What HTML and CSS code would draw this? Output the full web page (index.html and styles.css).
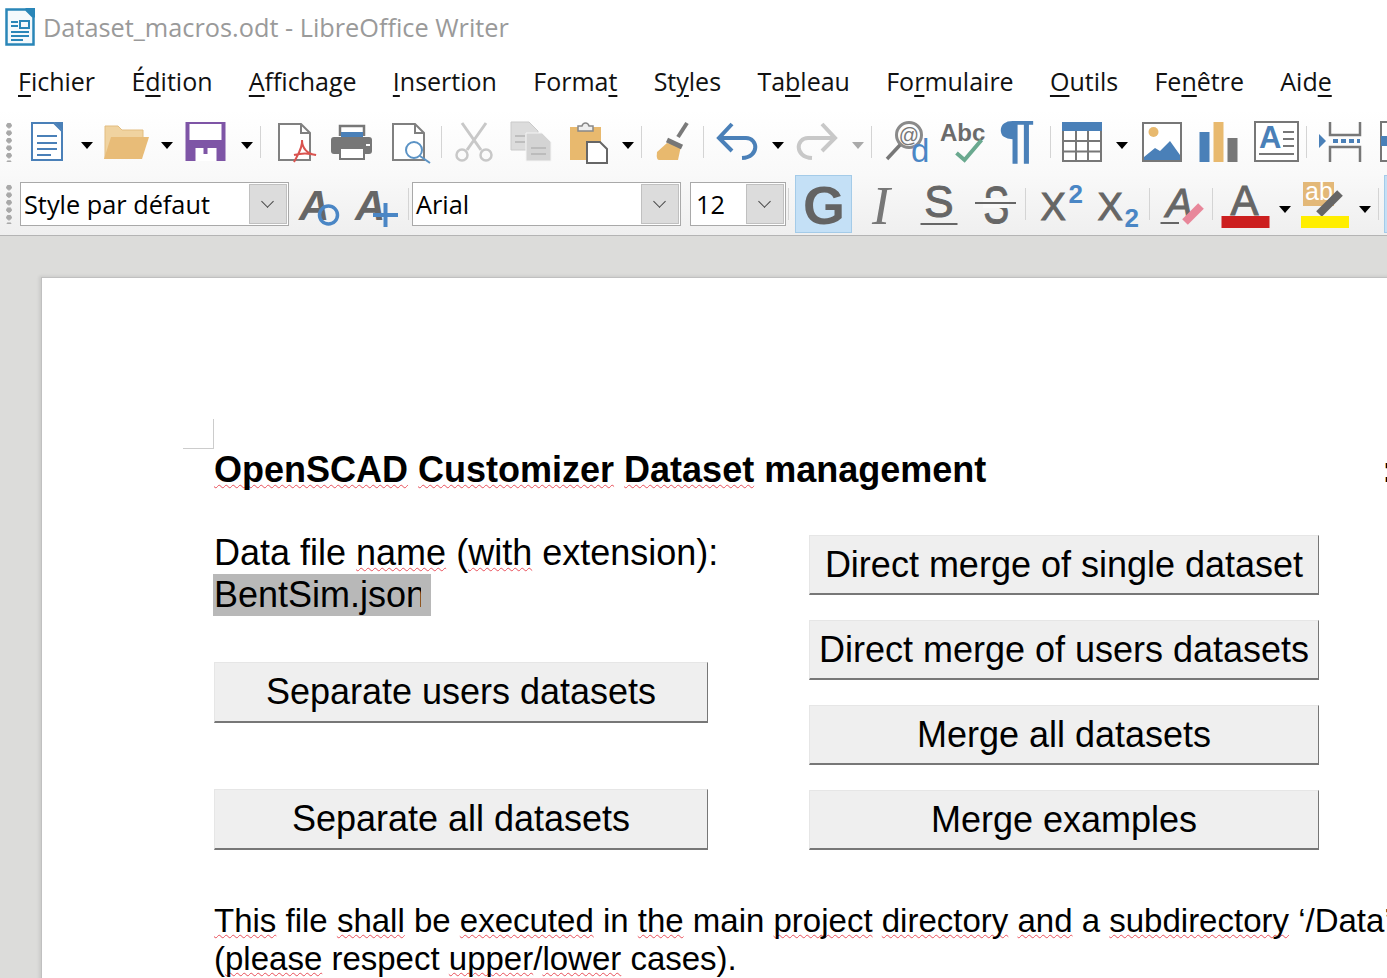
FILE: index.html
```html
<!DOCTYPE html>
<html lang="en">
<head>
    <meta charset="UTF-8">
    <meta name="viewport" content="width=device-width, initial-scale=1.0">
    <title>Dataset_macros.odt - LibreOffice Writer</title>
    <link rel="stylesheet" href="styles.css">
</head>
<body>
    <header class="titlebar">
        <svg class="app-icon" width="30" height="38" viewBox="0 0 30 38">
            <path d="M1.5 1.5H21L28.500 9V36.500H1.500Z" fill="#f4f9fc" stroke="#2a86b8" stroke-width="2.500"/>
            <path d="M20 0H30V10Z" fill="#2a86b8"/>
            <path d="M6 14H13M6 18H13M6 24H24M6 28H24M6 32H18" stroke="#2a86b8" stroke-width="2"/>
            <rect x="15" y="13" width="9" height="7" fill="none" stroke="#2a86b8" stroke-width="2"/>
        </svg>
        <span>Dataset_macros.odt - LibreOffice Writer</span>
    </header>

    <nav class="menubar">
        <span><u>F</u>ichier</span>
        <span>É<u>d</u>ition</span>
        <span><u>A</u>ffichage</span>
        <span><u>I</u>nsertion</span>
        <span>Forma<u>t</u></span>
        <span>St<u>y</u>les</span>
        <span>Ta<u>b</u>leau</span>
        <span>Fo<u>r</u>mulaire</span>
        <span><u>O</u>utils</span>
        <span>Fe<u>n</u>être</span>
        <span>Aid<u>e</u></span>
    </nav>

    <div class="toolbar toolbar-main">
        <div class="grip"></div>
        <div class="tool"><svg width="40" height="40" viewBox="0 0 40 40">
            <path d="M5 1H27L35 9V38H5Z" fill="#fff" stroke="#4a80b8" stroke-width="2"/>
            <path d="M27 0H36V9Z" fill="#4a80b8"/>
            <path d="M10 14H30M10 21H30M10 27H30M10 33H24" stroke="#4a80b8" stroke-width="2"/>
        </svg></div>
        <div class="drop"></div>
        <div class="tool"><svg width="40" height="40" viewBox="0 0 40 40">
            <path d="M-2 37V4H11L15 8H36V16H10Z" fill="#f0d3a0" stroke="#e2bd80"/>
            <path d="M-3 37L4 15H42L35 37Z" fill="#e8bc78"/>
        </svg></div>
        <div class="drop"></div>
        <div class="tool"><svg width="40" height="40" viewBox="0 0 40 40">
            <rect x="-1.500" y="0" width="40" height="39" fill="#7e55a6"/>
            <rect x="2.500" y="2" width="32" height="16" fill="#fff"/>
            <rect x="8.500" y="26" width="21" height="13" fill="#fff"/>
            <rect x="16.500" y="26" width="4" height="6" fill="#7e55a6"/>
        </svg></div>
        <div class="drop"></div>
        <div class="sep sep-wide"></div>
        <div class="tool"><svg width="40" height="40" viewBox="0 0 40 40">
            <path d="M2 2H24L33 11V38H2Z" fill="#fff" stroke="#808080" stroke-width="2"/>
            <path d="M24 2V11H33" fill="none" stroke="#808080" stroke-width="2"/>
            <path d="M17 40C20 34 26 26 25 18C25 26 30 32 39 33C32 31 24 31 17 33" fill="none" stroke="#d9534f" stroke-width="2"/>
        </svg></div>
        <div class="tool"><svg width="40" height="40" viewBox="0 0 40 40">
            <path d="M6 14V4H30V14" fill="#fff" stroke="#777" stroke-width="2.500"/>
            <rect x="7" y="10" width="22" height="6" fill="#4a80b8"/>
            <rect x="-3" y="15" width="41" height="17" rx="3" fill="#777"/>
            <rect x="6" y="26" width="24" height="11" fill="#fff" stroke="#777" stroke-width="2"/>
            <rect x="32" y="22" width="4" height="2" fill="#fff"/>
        </svg></div>
        <div class="tool"><svg width="40" height="40" viewBox="0 0 40 40">
            <path d="M2 2H24L33 11V38H2Z" fill="#fff" stroke="#808080" stroke-width="2"/>
            <path d="M24 2V11H33" fill="none" stroke="#808080" stroke-width="2"/>
            <circle cx="23" cy="28" r="8" fill="#fff" stroke="#5b93c5" stroke-width="2"/>
            <path d="M29 34L39 41" stroke="#5b93c5" stroke-width="2"/>
        </svg></div>
        <div class="sep"></div>
        <div class="tool"><svg width="40" height="40" viewBox="0 0 40 40">
            <path d="M8 1L27 28M32 1L13 28" stroke="#c8c8c8" stroke-width="3"/>
            <circle cx="8" cy="33" r="5.500" fill="none" stroke="#c8c8c8" stroke-width="2.500"/>
            <circle cx="32" cy="33" r="5.500" fill="none" stroke="#c8c8c8" stroke-width="2.500"/>
        </svg></div>
        <div class="tool"><svg width="40" height="40" viewBox="0 0 40 40">
            <path d="M0 0H18L27 9V28H0Z" fill="#dcdcdc" stroke="#cacaca"/>
            <path d="M15 11H31L40 20V39H15Z" fill="#d4d4d4" stroke="#f4f4f4"/>
            <path d="M4 14H14M4 20H14M20 26H35M20 32H35" stroke="#b4b4b4" stroke-width="1.500"/>
        </svg></div>
        <div class="tool"><svg width="40" height="40" viewBox="0 0 40 40">
            <rect x="2" y="5" width="31" height="33" fill="#e8b96e"/>
            <path d="M10 9V4H14C15 0 20 0 21 4H25V9Z" fill="#eee" stroke="#888" stroke-width="1.500"/>
            <path d="M19 20H32L39 27V41H19Z" fill="#fff" stroke="#666" stroke-width="2"/>
        </svg></div>
        <div class="drop"></div>
        <div class="sep sep-thin"></div>
        <div class="tool"><svg width="40" height="40" viewBox="0 0 40 40">
            <path d="M34 1L25 15" stroke="#7a7a7a" stroke-width="4"/>
            <path d="M14 21L4 30Q3 38 6 38H25L28 24Z" fill="#e8b96e"/>
            <path d="M14 18L29 25" stroke="#777" stroke-width="5"/>
        </svg></div>
        <div class="sep sep-mid"></div>
        <div class="tool"><svg width="40" height="40" viewBox="0 0 40 40">
            <path d="M14 2L1 16L14 29M1 16H28C40 16 42 35 24 36" fill="none" stroke="#4a80b8" stroke-width="4"/>
        </svg></div>
        <div class="drop"></div>
        <div class="tool"><svg width="40" height="40" viewBox="0 0 40 40">
            <path d="M24 2L37 16L24 29M37 16H10C-2 16 -4 35 14 36" fill="none" stroke="#c8c8c8" stroke-width="4"/>
        </svg></div>
        <div class="drop drop-off"></div>
        <div class="sep sep-mid"></div>
        <div class="tool"><svg width="40" height="40" viewBox="0 0 40 40">
            <circle cx="23" cy="13" r="12.500" fill="none" stroke="#8a8a8a" stroke-width="3"/>
            <path d="M14 23L1 37" stroke="#777" stroke-width="3.500"/>
            <text class="svg-sans" x="23" y="20" font-size="20" text-anchor="middle" fill="#777">@</text>
            <text class="svg-sans" x="25" y="40" font-size="33" fill="#4a86c5">d</text>
        </svg></div>
        <div class="tool"><svg width="40" height="40" viewBox="0 0 40 40">
            <text class="svg-sans svg-bold" x="-3" y="19" font-size="24" fill="#6b6b6b">Abc</text>
            <path d="M13.500 31L21.500 38L38.500 18" fill="none" stroke="#6aa98f" stroke-width="4"/>
        </svg></div>
        <div class="tool"><svg width="40" height="40" viewBox="0 0 40 40">
            <text class="svg-sans svg-bold" font-size="51" text-anchor="middle" fill="#4a80b8" transform="translate(17 35) scale(1.3 1)">¶</text>
        </svg></div>
        <div class="sep sep-thin"></div>
        <div class="tool"><svg width="40" height="40" viewBox="0 0 40 40">
            <rect x="1" y="1" width="38" height="38" fill="#fff" stroke="#777" stroke-width="2"/>
            <rect x="0" y="0" width="40" height="9" fill="#4a80b8"/>
            <path d="M14 9V39M26 9V39M1 19H39M1 29.500H39" stroke="#777" stroke-width="2"/>
        </svg></div>
        <div class="drop"></div>
        <div class="tool"><svg width="40" height="40" viewBox="0 0 40 40">
            <rect x="1" y="1" width="38" height="38" fill="#fff" stroke="#777" stroke-width="2"/>
            <circle cx="11.500" cy="10" r="5" fill="#e8b96e"/>
            <path d="M2 38V35L13 26L18 29L28 19L38 33V38Z" fill="#4a80b8"/>
        </svg></div>
        <div class="tool"><svg width="40" height="40" viewBox="0 0 40 40">
            <rect x="0.500" y="10" width="10" height="30" fill="#4a80b8"/>
            <rect x="14.500" y="0" width="10" height="40" fill="#e8b96e"/>
            <rect x="28.500" y="16" width="10" height="24" fill="#777"/>
        </svg></div>
        <div class="tool"><svg width="40" height="40" viewBox="0 0 40 40">
            <rect x="-1" y="0" width="43" height="39" fill="#fff" stroke="#777" stroke-width="2"/>
            <text class="svg-sans svg-bold" x="3" y="26" font-size="31" fill="#4a80b8">A</text>
            <path d="M27 10H38M27 17H38M27 24H38M3 32H38" stroke="#777" stroke-width="2"/>
        </svg></div>
        <div class="sep"></div>
        <div class="tool"><svg width="40" height="40" viewBox="0 0 40 40">
            <path d="M11 0V13H41V0M11 40V25H41V40" fill="none" stroke="#777" stroke-width="2.500"/>
            <path d="M14 19H41" stroke="#4a80b8" stroke-width="4" stroke-dasharray="5 3"/>
            <path d="M0 12L7 19L0 26Z" fill="#4a80b8"/>
        </svg></div>
        <div class="tool"><svg width="40" height="40" viewBox="0 0 40 40">
            <rect x="5" y="0" width="40" height="39" fill="#fff" stroke="#777" stroke-width="2"/>
            <rect x="5" y="14" width="12" height="10" fill="#4a80b8"/>
        </svg></div>
    </div>

    <div class="toolbar toolbar-format">
        <div class="grip"></div>
        <div class="combo combo-style"><span>Style par défaut</span><i class="combo-btn"></i></div>
        <div class="tool"><svg width="40" height="40" viewBox="0 0 40 40">
            <text class="svg-sans svg-bolditalic" x="-2" y="36" font-size="42" fill="#666">A</text>
            <circle cx="27.500" cy="31" r="9" fill="none" stroke="#4a86c5" stroke-width="3.500"/>
        </svg></div>
        <div class="tool"><svg width="40" height="40" viewBox="0 0 40 40">
            <text class="svg-sans svg-bolditalic" x="-3" y="36" font-size="42" fill="#666">A</text>
            <path d="M15 31H40M27.500 19V43" stroke="#4a86c5" stroke-width="4"/>
        </svg></div>
        <div class="sep sep-thin"></div>
        <div class="combo combo-font"><span>Arial</span><i class="combo-btn"></i></div>
        <div class="combo combo-size"><span>12</span><i class="combo-btn"></i></div>
        <div class="sep sep-tight"></div>
        <div class="tool tool-on"><svg width="40" height="40" viewBox="0 0 40 40">
            <text class="svg-sans svg-bold" x="20" y="40" font-size="54" text-anchor="middle" fill="#636363">G</text>
        </svg></div>
        <div class="tool"><svg width="40" height="40" viewBox="0 0 40 40">
            <text class="svg-serif" x="20" y="40" font-size="54" font-style="italic" text-anchor="middle" fill="#777">I</text>
        </svg></div>
        <div class="tool"><svg width="40" height="40" viewBox="0 0 40 40">
            <text class="svg-sans svg-heavy" x="21" y="33" font-size="44" text-anchor="middle" fill="#666">S</text>
            <path d="M2.500 40H39.500" stroke="#666" stroke-width="2"/>
        </svg></div>
        <div class="tool"><svg width="40" height="40" viewBox="0 0 40 40">
            <text class="svg-sans svg-heavy" x="28.500" y="39" font-size="52" text-anchor="middle" fill="#666" transform="scale(.75 1)">S</text>
            <rect x="8" y="14" width="26" height="10" fill="#f8f8f8"/>
            <path d="M0 19H41" stroke="#666" stroke-width="2"/>
        </svg></div>
        <div class="sep sep-wide"></div>
        <div class="tool"><svg width="40" height="40" viewBox="0 0 40 40">
            <text class="svg-sans svg-heavy" x="-1.500" y="36" font-size="38" fill="#666">X</text>
            <text class="svg-sans svg-bold" x="26.500" y="19" font-size="26" fill="#4a86c5">2</text>
        </svg></div>
        <div class="tool"><svg width="40" height="40" viewBox="0 0 40 40">
            <text class="svg-sans svg-heavy" x="-1.500" y="36" font-size="38" fill="#666">X</text>
            <text class="svg-sans svg-bold" x="25.500" y="43" font-size="26" fill="#4a86c5">2</text>
        </svg></div>
        <div class="sep"></div>
        <div class="tool"><svg width="40" height="40" viewBox="0 0 40 40">
            <text class="svg-sans svg-italic svg-heavy" x="4" y="33" font-size="40" fill="#666">A</text>
            <path d="M-1.500 39H17" stroke="#666" stroke-width="2"/>
            <path d="M23 38L39 22" stroke="#e8879a" stroke-width="8"/>
        </svg></div>
        <div class="sep"></div>
        <div class="tool"><svg width="40" height="40" viewBox="0 0 40 40">
            <text class="svg-sans svg-heavy" x="19.500" y="31" font-size="42" text-anchor="middle" fill="#666">A</text>
            <rect x="-3.500" y="32" width="48" height="12" fill="#cc1f1f"/>
        </svg></div>
        <div class="drop drop-low"></div>
        <div class="tool"><svg width="40" height="40" viewBox="0 0 40 40">
            <rect x="-2" y="-2" width="31" height="24" fill="#e3b878"/>
            <text class="svg-sans" x="0" y="16" font-size="25" fill="#fff">ab</text>
            <path d="M14 30L35 9" stroke="#666" stroke-width="8"/>
            <rect x="-4" y="32" width="48" height="12" fill="#ffee00"/>
        </svg></div>
        <div class="drop drop-low"></div>
        <div class="sep sep-mid"></div>
        <div class="tool tool-on"></div>
    </div>

    <main class="workspace">
        <article class="page">
            <div class="crop-mark"></div>
            <div class="doc-title">
                <strong><span class="sp">OpenSCAD</span> <span class="sp">Customizer</span> <span class="sp">Dataset</span> management</strong>
                <strong class="cut-char">:</strong>
            </div>
            <div class="doc-columns">
                <section class="col-left">
                    <p class="doc-line">Data file <span class="sp">name</span> (<span class="sp">with</span> extension):</p>
                    <p class="doc-line"><span class="field"><span class="field-text">BentSim.json</span></span></p>
                    <div class="doc-btn btn-first">Separate users datasets</div>
                    <div class="doc-btn btn-second">Separate all datasets</div>
                </section>
                <section class="col-right">
                    <div class="doc-btn">Direct merge of single dataset</div>
                    <div class="doc-btn">Direct merge of users datasets</div>
                    <div class="doc-btn">Merge all datasets</div>
                    <div class="doc-btn">Merge examples</div>
                </section>
            </div>
            <p class="doc-note doc-note-first"><span class="sp">This</span> file <span class="sp">shall</span> be <span class="sp">executed</span> in <span class="sp">the</span> main <span class="sp">project</span> <span class="sp">directory</span> <span class="sp">and</span> a <span class="sp">subdirectory</span> ‘/Data’</p>
            <p class="doc-note">(<span class="sp">please</span> respect <span class="sp">upper</span>/<span class="sp">lower</span> cases).</p>
        </article>
    </main>
</body>
</html>
```

FILE: styles.css
```css
/* Global styles */
html, body {
    height: 100%;
}

body {
    margin: 0;
    overflow: hidden;
    display: flex;
    flex-direction: column;
    background: #fff;
    font-family: 'Open Sans', 'Liberation Sans', sans-serif;
    color: #000;
}

svg {
    display: block;
    overflow: visible;
}

.svg-sans {
    font-family: 'Liberation Sans', sans-serif;
}

.svg-serif {
    font-family: 'Liberation Serif', serif;
}

.svg-bold {
    font-weight: bold;
}

.svg-italic {
    font-style: italic;
}

.svg-bolditalic {
    font-weight: bold;
    font-style: italic;
}

.svg-heavy {
    stroke: #666;
    stroke-width: 1px;
}

/* Title bar */
.titlebar {
    height: 55px;
    box-sizing: border-box;
    padding: 0 0 1px 5px;
    flex: none;
    display: flex;
    align-items: center;
    gap: 8px;
    font-size: 25.300px;
    color: #9a9a9a;
}

/* Menu bar */
.menubar {
    height: 55px;
    box-sizing: border-box;
    padding: 0 0 3px 18px;
    flex: none;
    display: flex;
    align-items: center;
    gap: 36.300px;
    font-size: 25px;
    color: #111;
}

.menubar u {
    text-underline-offset: 4px;
    text-decoration-thickness: 2px;
}

/* Toolbars */
.toolbar {
    flex: none;
    display: flex;
    overflow: hidden;
}

.toolbar-main {
    height: 64px;
    align-items: center;
    background: linear-gradient(#fff, #f9f9f9);
}

.toolbar-format {
    height: 62px;
    padding: 1px 0 2px;
    box-sizing: border-box;
    align-items: stretch;
    background: linear-gradient(#f9f9f9, #efefef);
    border-bottom: 1px solid #b4b4b4;
}

.grip {
    width: 18px;
    height: 40px;
    flex: none;
    align-self: center;
    background: radial-gradient(circle at 9px 3.500px, #a8a8a8 2.500px, transparent 3px) 0 0 / 18px 7.500px;
}

.tool {
    width: 57px;
    flex: none;
    display: flex;
    align-items: center;
    justify-content: center;
    box-sizing: border-box;
}

.tool-on {
    background: #c4e0f6;
    border: 1px solid #a4cbe8;
}

.drop {
    width: 23px;
    flex: none;
    position: relative;
    align-self: stretch;
}

.drop::after {
    content: "";
    position: absolute;
    left: 6px;
    top: 50%;
    border-top: 7px solid #000;
    border-left: 6.500px solid transparent;
    border-right: 6.500px solid transparent;
}

.drop-off::after {
    border-top-color: #aaa;
}

.drop-low::after {
    margin-top: 2px;
}

.sep {
    width: 6px;
    flex: none;
    position: relative;
    align-self: stretch;
}

.sep::after {
    content: "";
    position: absolute;
    left: 2px;
    top: 50%;
    height: 32px;
    margin-top: -16px;
    border-left: 1px solid #d4d4d4;
}

.sep-wide {
    width: 10px;
}

.sep-mid {
    width: 8px;
}

.sep-thin {
    width: 5px;
}

.sep-tight {
    width: 9px;
}

/* Combo boxes */
.combo {
    height: 44px;
    box-sizing: border-box;
    flex: none;
    align-self: center;
    display: flex;
    justify-content: space-between;
    align-items: center;
    padding: 1px 1px 1px 3px;
    background: #fff;
    border: 1px solid #a9a9a9;
    font-size: 25.300px;
}

.combo-style {
    width: 269px;
    margin: 0 3px 0 2px;
}

.combo-font {
    width: 269px;
    margin-left: 1px;
}

.combo-size {
    width: 96px;
    margin-left: 9px;
    padding-left: 5px;
}

.combo-btn {
    width: 38px;
    height: 40px;
    box-sizing: border-box;
    position: relative;
    background: #dcdcdc;
    border: 1px solid #c0c0c0;
}

.combo-btn::after {
    content: "";
    position: absolute;
    left: 13px;
    top: 12px;
    width: 8px;
    height: 8px;
    border-right: 1px solid #444;
    border-bottom: 1px solid #444;
    transform: rotate(45deg);
}

/* Document area */
.workspace {
    flex: 1;
    min-height: 0;
    overflow: hidden;
    padding: 41px 0 0 41px;
    background: #dcdcda;
}

.page {
    width: 1500px;
    height: 800px;
    padding: 141px 0 0 172px;
    box-sizing: border-box;
    background: #fff;
    border-top: 1px solid #c0c0c0;
    border-left: 1px solid #c0c0c0;
    box-shadow: -2px -1px 3px rgba(0, 0, 0, 0.08);
    font-family: 'Liberation Sans', sans-serif;
    font-size: 36px;
}

.crop-mark {
    width: 30px;
    height: 29px;
    margin-left: -31px;
    border-right: 1px solid #ccc;
    border-bottom: 1px solid #ccc;
}

.sp {
    text-decoration: underline wavy #e8505a 1px;
    text-underline-offset: 2px;
    text-decoration-skip-ink: none;
}

.doc-title {
    display: flex;
    height: 42px;
    line-height: 42px;
    white-space: nowrap;
}

.cut-char {
    margin-left: 396px;
}

.doc-columns {
    display: grid;
    grid-template-columns: 494px 510px;
    column-gap: 101px;
    margin-top: 44px;
}

.col-left {
    display: flex;
    flex-direction: column;
    align-items: flex-start;
    margin-top: -3px;
}

.col-right {
    display: flex;
    flex-direction: column;
    gap: 25px;
}

.doc-line {
    margin: 0;
    height: 42px;
    line-height: 42px;
    white-space: nowrap;
}

.field {
    display: inline-block;
    padding: 0 10px 0 1px;
    margin-left: -1px;
    background: #b8b8b8;
}

.field-text {
    display: inline-block;
    width: 207px;
    overflow: hidden;
    vertical-align: bottom;
}

.doc-btn {
    width: 100%;
    height: 60px;
    box-sizing: border-box;
    display: flex;
    align-items: center;
    justify-content: center;
    white-space: nowrap;
    background: #efefef;
    border-top: 1px solid #e6e6e6;
    border-left: 1px solid #e6e6e6;
    border-right: 1px solid #777;
    border-bottom: 2px solid #777;
}

.col-left .doc-btn {
    height: 61px;
}

.btn-first {
    margin-top: 46px;
}

.btn-second {
    margin-top: 66px;
}

.doc-note {
    margin: 0;
    height: 38px;
    line-height: 38px;
    font-size: 33px;
    white-space: nowrap;
}

.doc-note-first {
    margin-top: 52px;
}
```
